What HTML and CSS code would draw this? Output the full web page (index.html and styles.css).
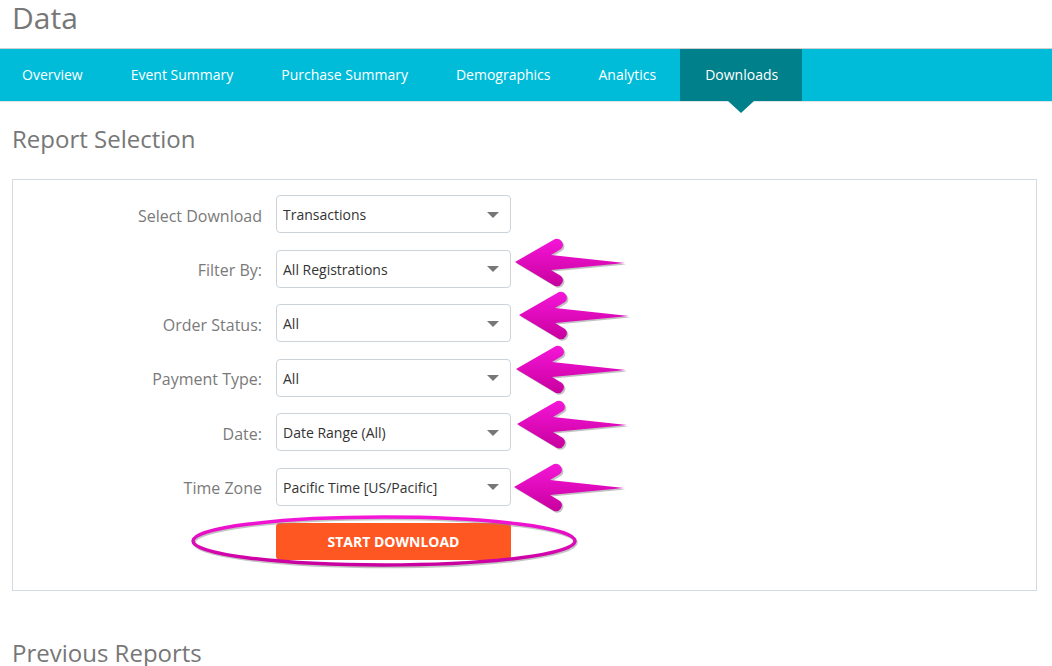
FILE: index.html
```html
<!DOCTYPE html>
<html lang="en">
<head>
    <meta charset="UTF-8">
    <meta name="viewport" content="width=device-width, initial-scale=1.0">
    <title>Data - Downloads</title>
    <link rel="stylesheet" href="styles.css">
</head>
<body>
    <header class="page-header">
        <h1>Data</h1>
    </header>

    <nav class="tabs">
        <ul>
            <li><a href="#">Overview</a></li>
            <li><a href="#">Event Summary</a></li>
            <li><a href="#">Purchase Summary</a></li>
            <li><a href="#">Demographics</a></li>
            <li><a href="#">Analytics</a></li>
            <li class="active"><a href="#">Downloads</a></li>
        </ul>
    </nav>

    <main class="content">
        <h2 class="section-title">Report Selection</h2>

        <form class="report-box">
            <div class="form-row">
                <label>Select Download</label>
                <div class="select"><span>Transactions</span><i class="caret"></i></div>
            </div>
            <div class="form-row">
                <label>Filter By:</label>
                <div class="select"><span>All Registrations</span><i class="caret"></i></div>
            </div>
            <div class="form-row">
                <label>Order Status:</label>
                <div class="select"><span>All</span><i class="caret"></i></div>
            </div>
            <div class="form-row">
                <label>Payment Type:</label>
                <div class="select"><span>All</span><i class="caret"></i></div>
            </div>
            <div class="form-row">
                <label>Date:</label>
                <div class="select"><span>Date Range (All)</span><i class="caret"></i></div>
            </div>
            <div class="form-row">
                <label>Time Zone</label>
                <div class="select"><span>Pacific Time [US/Pacific]</span><i class="caret"></i></div>
            </div>
            <div class="form-row">
                <span></span>
                <button type="button">START DOWNLOAD</button>
            </div>
        </form>

        <h2 class="section-title previous">Previous Reports</h2>
    </main>

    <!-- hand drawn markup on top of the screenshot -->
    <svg class="annotations" width="1052" height="666" viewBox="0 0 1052 666">
        <defs>
            <linearGradient id="pink" x1="0" y1="0" x2="0" y2="1">
                <stop offset="0" stop-color="#f516d8"/>
                <stop offset="1" stop-color="#c8009e"/>
            </linearGradient>
            <path id="arrow" d="M0,0 L40,-23 A6,6 0 0 1 46,-13 L36,-7 L110,1 L36,8 L46,14 A6,6 0 0 1 40,24 Z"/>
            <g id="mark">
                <use href="#arrow" x="1.5" y="1.5" fill="#777" opacity="0.45"/>
                <use href="#arrow" fill="url(#pink)"/>
            </g>
        </defs>

        <use href="#mark" x="515" y="262"/>
        <use href="#mark" x="519" y="315"/>
        <use href="#mark" x="516" y="369"/>
        <use href="#mark" x="517" y="424"/>
        <use href="#mark" x="514" y="487"/>

        <ellipse cx="385" cy="542.5" rx="191" ry="24" fill="none" stroke="#888" stroke-opacity="0.5" stroke-width="3.5"/>
        <ellipse cx="384" cy="541" rx="191" ry="24" fill="none" stroke="url(#pink)" stroke-width="3.5"/>
    </svg>
</body>
</html>
```

FILE: styles.css
```css
* {
    margin: 0;
    padding: 0;
    box-sizing: border-box;
}

body {
    font-family: "Open Sans", Arial, sans-serif;
    background: white;
    color: #333;
    position: relative;
    min-height: 100vh;
    overflow: hidden;
}

.page-header {
    height: 49px;
    padding-left: 12px;
    border-bottom: 1px solid #cfcfcf;
}

    .page-header h1 {
        font-size: 30px;
        font-weight: normal;
        line-height: 35px;
        color: #777;
    }

.tabs {
    background: #00bcd9;
    height: 53px;
    border-bottom: 1px solid #dde3e6;
}

    .tabs ul {
        list-style: none;
        display: flex;
        height: 100%;
        margin-left: -2px;
    }

    .tabs li {
        position: relative;
        display: flex;
        align-items: center;
        padding: 0 24px 1px;
    }

    .tabs a {
        color: white;
        text-decoration: none;
        font-size: 14px;
    }

    .tabs li.active {
        background: #00808b;
        padding: 0 24px 1px 25px;
    }

        .tabs li.active::after {
            content: "";
            position: absolute;
            left: 50%;
            top: 100%;
            margin-left: -13px;
            border-left: 13px solid transparent;
            border-right: 13px solid transparent;
            border-top: 12px solid #00808b;
        }

.content {
    padding: 0 15px 0 12px;
}

.section-title {
    font-size: 24px;
    font-weight: normal;
    line-height: 30px;
    color: #777;
    margin-top: 22px;
    margin-bottom: 25px;
}

    .section-title.previous {
        margin-top: 47px;
    }

.report-box {
    border: 1px solid #d3dbe0;
    padding: 15px 0 30px;
    display: flex;
    flex-direction: column;
    gap: 16.6px;
}

.form-row {
    display: grid;
    grid-template-columns: 249px 235px;
    column-gap: 14px;
    align-items: center;
}

    .form-row label {
        text-align: right;
        font-size: 16px;
        color: #7a7a7a;
        padding-top: 3px;
    }

.select {
    height: 38px;
    border: 1px solid #ccd4da;
    border-radius: 4px;
    padding: 1px 11px 0 6px;
    display: flex;
    align-items: center;
    justify-content: space-between;
    font-size: 14px;
    color: #333;
    background: white;
}

.caret {
    width: 0;
    height: 0;
    border-left: 6px solid transparent;
    border-right: 6px solid transparent;
    border-top: 6px solid #777;
}

button {
    height: 37px;
    background: #ff5722;
    color: white;
    border: none;
    border-radius: 4px;
    font-family: "Open Sans", Arial, sans-serif;
    font-weight: bold;
    font-size: 14px;
    cursor: pointer;
}

.annotations {
    position: absolute;
    top: 0;
    left: 0;
    pointer-events: none;
}
```
